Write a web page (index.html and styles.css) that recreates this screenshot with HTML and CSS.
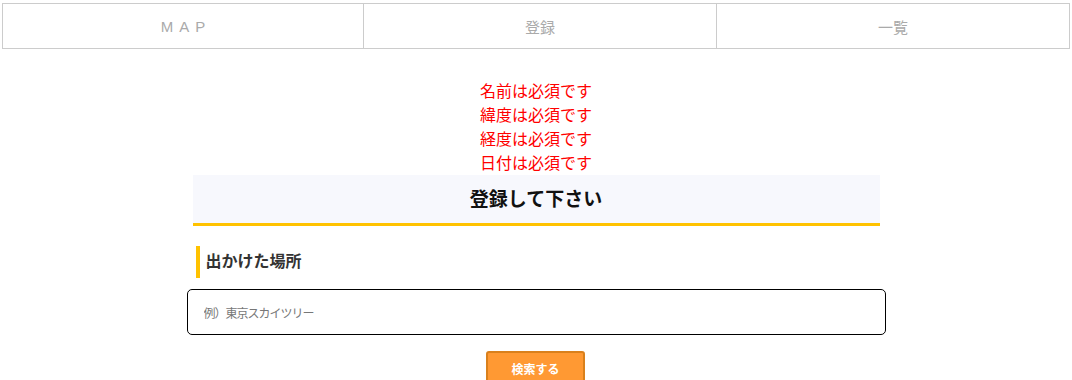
FILE: index.html
```html
<!DOCTYPE html>
<html>

<head>
    <meta charset="UTF-8">
    <title>登録</title>
    <link rel="stylesheet" href="styles.css">
</head>

<body>
    <nav class="nav">
        <a class="nav-item nav-map" href="#">MAP</a>
        <a class="nav-item nav-new" href="#">登録</a>
        <a class="nav-item nav-list" href="#">一覧</a>
    </nav>

    <div class="container">
        <ul class="errors">
            <li>名前は必須です</li>
            <li>緯度は必須です</li>
            <li>経度は必須です</li>
            <li>日付は必須です</li>
        </ul>

        <h1 class="page-title">登録して下さい</h1>

        <form class="form">
            <h2 class="section-title">出かけた場所</h2>
            <input type="text" class="place-input" placeholder="例）東京スカイツリー">
            <div class="actions">
                <button type="button" class="search-btn">検索する</button>
            </div>
        </form>
    </div>
</body>

</html>
```

FILE: styles.css
```css
body {
    font-family: "Noto Sans CJK JP", "Noto Sans", sans-serif;
    margin: 0;
    padding: 3px 2px 0;
    background: #fff;
    color: #333;
}

.nav {
    display: grid;
    grid-template-columns: 360px 353px 1fr;
    border: 1px solid #ccc;
    height: 44px;
}

.nav-item {
    display: flex;
    align-items: center;
    justify-content: center;
    color: #aaa;
    font-size: 15px;
    text-decoration: none;
    border-left: 1px solid #ccc;
}

.nav-item:first-child {
    border-left: none;
}

.nav-map {
    letter-spacing: 6px;
    padding-left: 6px;
    font-family: "Liberation Sans", Arial, sans-serif;
}

.container {
    width: 687px;
    margin: 0 auto;
}

.errors {
    list-style: none;
    margin: 29px 0 0;
    padding: 0;
    text-align: center;
    color: #ff0000;
    font-size: 16px;
    line-height: 24px;
}

.page-title {
    margin: 1px 0 0;
    background: #f7f8fd;
    border-bottom: 3px solid #ffc200;
    height: 48px;
    line-height: 45px;
    text-align: center;
    font-size: 19px;
    font-weight: bold;
    color: #111;
}

.section-title {
    margin: 20px 0 0 3px;
    border-left: 4px solid #ffc200;
    padding-left: 6px;
    height: 32px;
    line-height: 29px;
    font-size: 16px;
    font-weight: bold;
    color: #333;
}

.place-input {
    display: block;
    box-sizing: border-box;
    width: 699px;
    height: 46px;
    margin: 11px 0 0 -6px;
    padding: 0 16px;
    border: 1px solid #000;
    border-radius: 5px;
    font-family: inherit;
    font-size: 12px;
    letter-spacing: -1px;
}

.place-input::placeholder {
    color: #777;
}

.actions {
    display: flex;
    justify-content: center;
    margin-top: 16px;
}

.search-btn {
    width: 99px;
    height: 34px;
    margin-left: -1px;
    background: #ff9933;
    border: 2px solid #d9801c;
    border-radius: 3px;
    color: #fff;
    font-family: inherit;
    font-size: 12px;
    font-weight: bold;
}
```
